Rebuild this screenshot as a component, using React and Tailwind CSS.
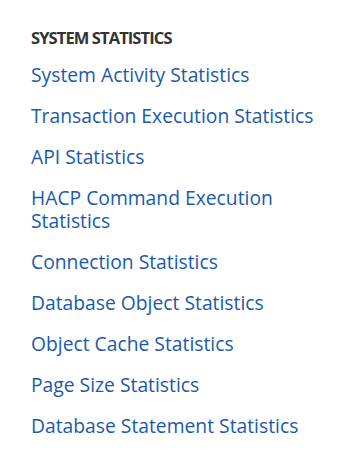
const links = [
  "System Activity Statistics",
  "Transaction Execution Statistics",
  "API Statistics",
  "HACP Command Execution Statistics",
  "Connection Statistics",
  "Database Object Statistics",
  "Object Cache Statistics",
  "Page Size Statistics",
  "Database Statement Statistics",
];

export default function App() {
  return (
    <div className="min-h-screen bg-white pt-[26px] pl-[31px] pr-[20px] font-['Open_Sans',sans-serif]">
      <h2 className="text-[16.5px] font-bold leading-[24px] tracking-[-0.9px] text-[#333333] uppercase">
        System Statistics
      </h2>
      <ul className="mt-[13px] flex flex-col gap-[18px]">
        {links.map((label) => (
          <li key={label}>
            <a href="#" className="block text-[19.3px] leading-[23px] text-[#1a5aad]">
              {label}
            </a>
          </li>
        ))}
      </ul>
    </div>
  );
}
